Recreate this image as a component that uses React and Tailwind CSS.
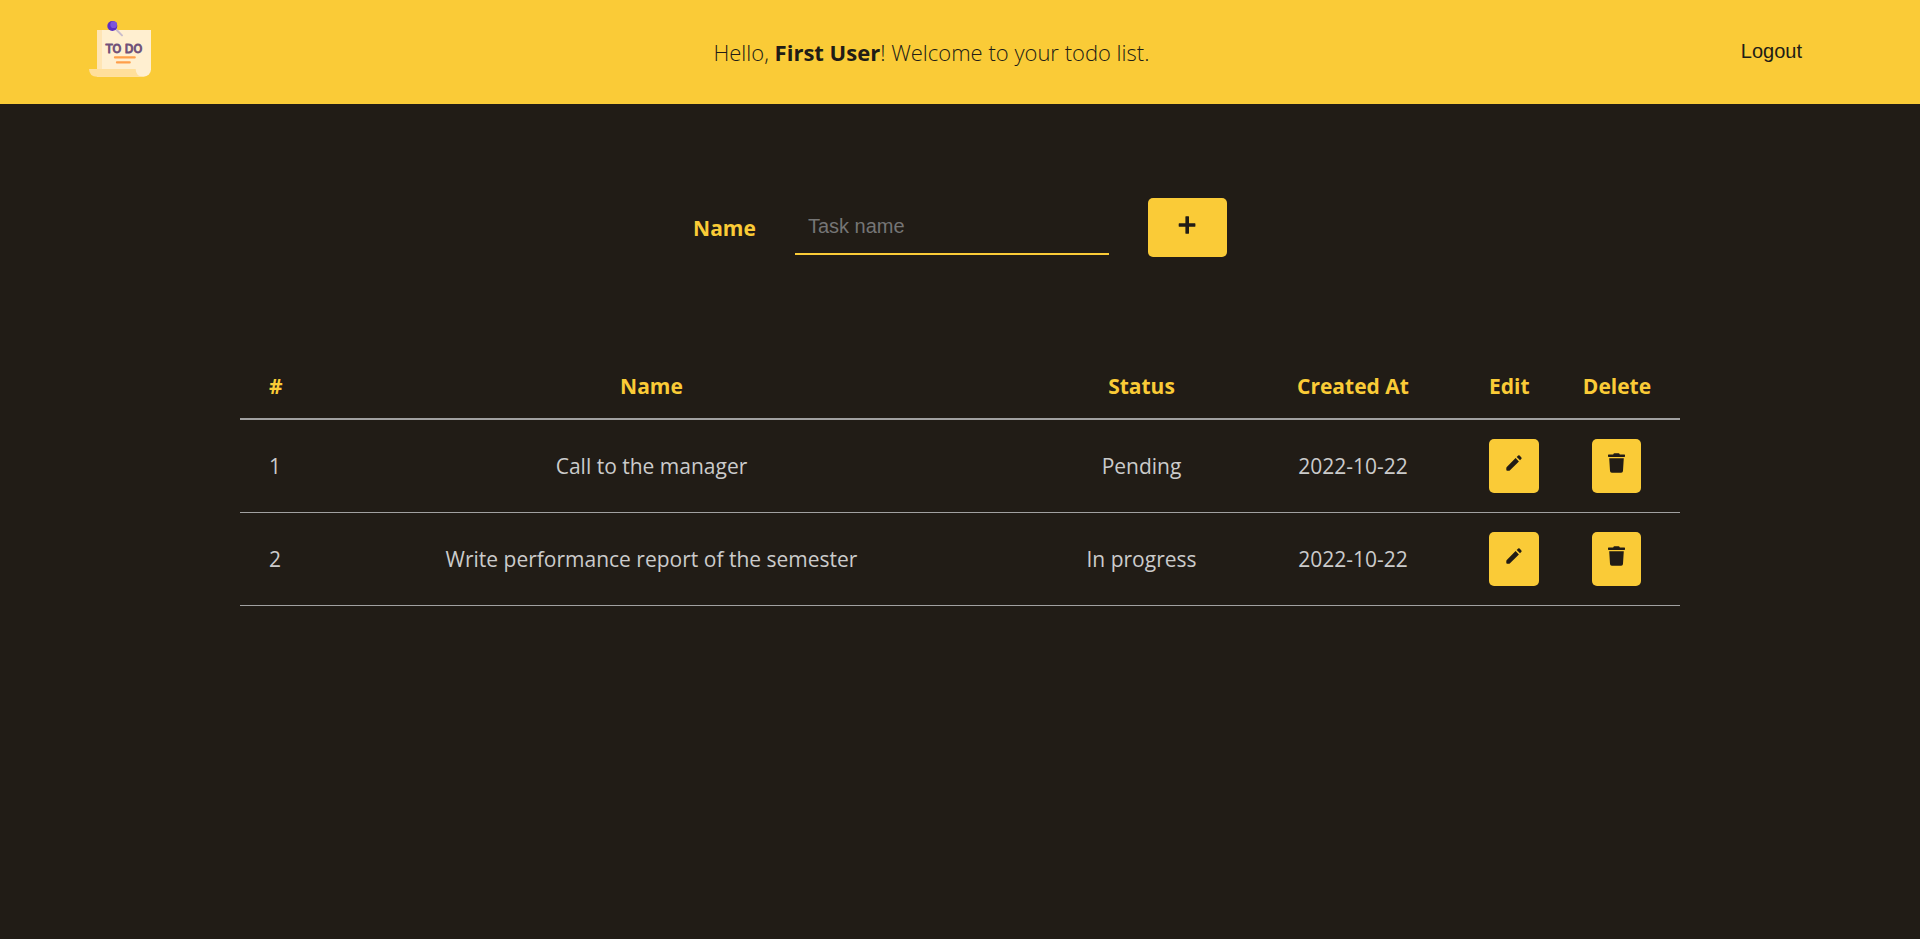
import { useState } from "react";
import { FaTrash } from "react-icons/fa";

const tasks = [
  { id: 1, name: "Call to the manager", status: "Pending", createdAt: "2022-10-22" },
  { id: 2, name: "Write performance report of the semester", status: "In progress", createdAt: "2022-10-22" },
];

function Logo() {
  return (
    <svg viewBox="54 60 192 192" className="size-16" role="img" aria-label="Todo">
      <path d="M81 90H243V208A22 22 0 0 1 221 230H81Z" fill="#ffefd0" />
      <path d="M81 90H96V208H81Z" fill="#ffe5b4" />
      <path d="M57 207H197Q197 230 221 230H81Q58 230 57 207Z" fill="#ffdf9b" />
      <path d="M134 84L156 106" stroke="#c9bccb" strokeWidth="6" strokeLinecap="round" />
      <circle cx="127" cy="78" r="15" fill="#5b2fc4" />
      <circle cx="131" cy="74" r="10" fill="#7d55dc" />
      <text
        x="162"
        y="159"
        textAnchor="middle"
        fontSize="37"
        strokeWidth="3"
        strokeLinejoin="round"
        className="fill-[#71527a] stroke-[#71527a] font-['DejaVu_Sans_Condensed','DejaVu_Sans',sans-serif] font-normal"
      >
        TO DO
      </text>
      <path d="M135 172H194M141 187H179" stroke="#ff9f4a" strokeWidth="7" strokeLinecap="round" />
    </svg>
  );
}

function PlusIcon() {
  return (
    <svg viewBox="0 0 18 18" className="size-[18px]" fill="currentColor" aria-hidden="true">
      <path d="M7.8 0.3H10.6Q11 0.3 11 0.7V7.3H17Q17.4 7.3 17.4 7.7V10.3Q17.4 10.7 17 10.7H11V17.3Q11 17.7 10.6 17.7H7.8Q7.4 17.7 7.4 17.3V10.7H1.1Q0.7 10.7 0.7 10.3V7.7Q0.7 7.3 1.1 7.3H7.4V0.7Q7.4 0.3 7.8 0.3Z" />
    </svg>
  );
}

function PencilIcon() {
  return (
    <svg viewBox="0 0 16 16" className="size-4" fill="currentColor" aria-hidden="true">
      <path d="M9.6 3.1L12.9 6.4L4 15.2Q3.5 15.7 2.8 15.7H1.2Q0.3 15.7 0.3 14.8V13.2Q0.3 12.5 0.8 12Z" />
      <path d="M10.7 2L12.2 0.6Q12.9 0 13.6 0.6L15.4 2.4Q16 3.1 15.4 3.8L14 5.3Z" />
    </svg>
  );
}

function Header() {
  return (
    <header className="flex h-[104px] items-center justify-between bg-[#facb37] px-[88px]">
      <Logo />
      <p className="text-[22px] font-light">
        Hello, <b className="font-bold">First User</b>! Welcome to your todo list.
      </p>
      <button type="button" className="px-[30px] pb-0.5 font-['Liberation_Sans',sans-serif] text-xl">
        Logout
      </button>
    </header>
  );
}

function TaskForm() {
  const [name, setName] = useState("");
  return (
    <form className="flex items-center justify-center gap-[39px]" onSubmit={(e) => e.preventDefault()}>
      <label htmlFor="task-name" className="pt-0.5 text-[21px] font-bold text-[#facb37]">
        Name
      </label>
      <input
        id="task-name"
        type="text"
        placeholder="Task name"
        value={name}
        onChange={(e) => setName(e.target.value)}
        className="h-[54px] w-[314px] border-b-2 border-[#facb37] bg-transparent px-[13px] font-['Liberation_Sans',sans-serif] text-xl outline-none placeholder:text-[#757575]"
      />
      <button
        type="submit"
        aria-label="Add task"
        className="flex h-[59px] w-[79px] items-center justify-center rounded-[5px] bg-[#facb37] pb-[5px] text-[#211c16]"
      >
        <PlusIcon />
      </button>
    </form>
  );
}

function IconButton({ label, children }) {
  return (
    <button
      type="button"
      aria-label={label}
      className="flex h-[54px] items-center justify-center rounded-[5px] bg-[#facb37] px-4 pb-1.5 text-[#211c16]"
    >
      {children}
    </button>
  );
}

function TaskTable() {
  return (
    <table className="mx-auto w-3/4 table-fixed border-separate border-spacing-0 text-[21px] leading-[30px]">
      <thead className="text-[#facb37] [&_th]:border-b-2 [&_th]:border-[#a1a1a1] [&_th]:pt-[18px] [&_th]:pb-[17px]">
        <tr>
          <th scope="col" className="w-[48px] pl-[29px] text-left">#</th>
          <th scope="col">Name</th>
          <th scope="col" className="w-[253px]">Status</th>
          <th scope="col" className="w-[170px]">Created At</th>
          <th scope="col" className="w-[116px] pl-[51px] text-left">Edit</th>
          <th scope="col" className="w-[126px]">Delete</th>
        </tr>
      </thead>
      <tbody className="text-center text-[#cbcbcb] [&_td]:border-b [&_td]:border-[#a1a1a1] [&_td]:py-[19px]">
        {tasks.map((task) => (
          <tr key={task.id}>
            <td className="pl-[29px] text-left">{task.id}</td>
            <td>{task.name}</td>
            <td>{task.status}</td>
            <td>{task.createdAt}</td>
            <td className="pl-[51px]">
              <IconButton label={`Edit ${task.name}`}>
                <span className="px-px">
                  <PencilIcon />
                </span>
              </IconButton>
            </td>
            <td className="pl-[38px]">
              <IconButton label={`Delete ${task.name}`}>
                <FaTrash size={20} className="w-[17px]" preserveAspectRatio="xMidYMid meet" />
              </IconButton>
            </td>
          </tr>
        ))}
      </tbody>
    </table>
  );
}

export default function App() {
  return (
    <div className="min-h-screen bg-[#211c16] font-['Open_Sans',sans-serif] text-[#211c16]">
      <Header />
      <main className="flex flex-col gap-24 pt-[94px] text-[#cbcbcb]">
        <TaskForm />
        <TaskTable />
      </main>
    </div>
  );
}
